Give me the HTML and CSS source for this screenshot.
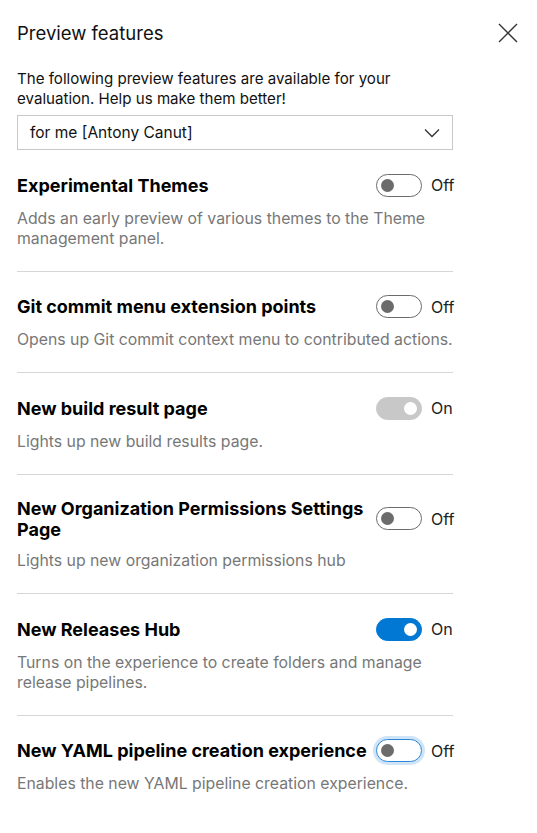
FILE: index.html
```html
<!DOCTYPE html>
<html>
<head>
<meta charset="utf-8">
<link rel="stylesheet" href="styles.css">
</head>
<body>
<div class="panel">
  <div class="header">
    <h1 class="title">Preview features</h1>
    <button class="close" aria-label="Close">
      <svg width="20" height="20" viewBox="0 0 20 20"><path d="M1 1L19 19M19 1L1 19" stroke="#333" stroke-width="1.4" fill="none"/></svg>
    </button>
  </div>
  <div class="content">
    <p class="intro">The following preview features are available for your evaluation. Help us make them better!</p>
    <div class="dropdown">
      <span>for me [Antony Canut]</span>
      <svg width="16" height="10" viewBox="0 0 16 10"><path d="M1 1.5L8 8.5L15 1.5" stroke="#333" stroke-width="1.3" fill="none"/></svg>
    </div>
    <ul class="features">
      <li class="feature first">
        <div class="row">
          <span class="name">Experimental Themes</span>
          <span class="switch"><span class="toggle off"><span class="knob"></span></span><span class="state">Off</span></span>
        </div>
        <p class="desc">Adds an early preview of various themes to the Theme management panel.</p>
      </li>
      <li class="feature">
        <div class="row">
          <span class="name">Git commit menu extension points</span>
          <span class="switch"><span class="toggle off"><span class="knob"></span></span><span class="state">Off</span></span>
        </div>
        <p class="desc">Opens up Git commit context menu to contributed actions.</p>
      </li>
      <li class="feature">
        <div class="row">
          <span class="name">New build result page</span>
          <span class="switch"><span class="toggle on disabled"><span class="knob"></span></span><span class="state">On</span></span>
        </div>
        <p class="desc">Lights up new build results page.</p>
      </li>
      <li class="feature">
        <div class="row">
          <span class="name">New Organization Permissions Settings Page</span>
          <span class="switch"><span class="toggle off"><span class="knob"></span></span><span class="state">Off</span></span>
        </div>
        <p class="desc">Lights up new organization permissions hub</p>
      </li>
      <li class="feature">
        <div class="row">
          <span class="name">New Releases Hub</span>
          <span class="switch"><span class="toggle on"><span class="knob"></span></span><span class="state">On</span></span>
        </div>
        <p class="desc">Turns on the experience to create folders and manage release pipelines.</p>
      </li>
      <li class="feature last">
        <div class="row">
          <span class="name">New YAML pipeline creation experience</span>
          <span class="switch"><span class="toggle off focused"><span class="knob"></span></span><span class="state">Off</span></span>
        </div>
        <p class="desc">Enables the new YAML pipeline creation experience.</p>
      </li>
    </ul>
  </div>
</div>
</body>
</html>
```
FILE: styles.css
```css
* { box-sizing: border-box; }
html, body {
  margin: 0;
  padding: 0;
  background: #fff;
}
body {
  font-family: Inter, "Liberation Sans", Arial, sans-serif;
  color: #000;
}
.panel {
  width: 537px;
  padding: 0 19px 0 17px;
}
.header {
  display: flex;
  align-items: center;
  justify-content: space-between;
  height: 64px;
  padding-top: 1px;
}
.title {
  margin: 0;
  font-size: 18.5px;
  font-weight: 400;
  line-height: 24px;
  color: #111;
}
.close {
  border: 0;
  background: none;
  padding: 0;
  width: 20px;
  height: 20px;
  display: flex;
}
.content {
  width: 436px;
}
.intro {
  margin: 5px 0 6px;
  font-size: 15.1px;
  line-height: 20px;
  color: #111;
}
.dropdown {
  height: 35px;
  border: 1px solid #c8c8c8;
  display: flex;
  align-items: center;
  justify-content: space-between;
  padding: 0 12px 0 12px;
  font-size: 15.5px;
  color: #111;
}
.features {
  list-style: none;
  margin: 0;
  padding: 0;
}
.feature {
  padding: 23px 0 22px;
  border-bottom: 1px solid #d6d6d6;
}
.feature.first { padding-top: 23px; }
.feature.last { border-bottom: 0; }
.row {
  display: flex;
  align-items: center;
  justify-content: space-between;
  gap: 6px;
  min-height: 24px;
}
.name {
  font-size: 18px;
  font-weight: 700;
  line-height: 21px;
  flex: 1;
}
.switch {
  display: flex;
  align-items: center;
  gap: 9px;
  width: 77px;
  flex: none;
}
.toggle {
  position: relative;
  width: 46px;
  height: 23px;
  border-radius: 12px;
  border: 1px solid #6b6b6b;
  background: #fff;
  flex: none;
}
.knob {
  position: absolute;
  top: 4px;
  left: 4px;
  width: 13px;
  height: 13px;
  border-radius: 50%;
  background: #6b6b6b;
}
.toggle.on {
  background: #0078d4;
  border-color: #0078d4;
}
.toggle.on .knob {
  left: auto;
  right: 4px;
  background: #fff;
}
.toggle.disabled {
  background: #c8c8c8;
  border-color: #c8c8c8;
}
.toggle.focused {
  border-color: #2b88d8;
  box-shadow: 0 0 0 3px #cfe4f7;
}
.state {
  font-size: 16px;
  color: #222;
}
.desc {
  margin: 11.5px 0 0;
  font-size: 15.8px;
  line-height: 20px;
  color: #777;
}
```
